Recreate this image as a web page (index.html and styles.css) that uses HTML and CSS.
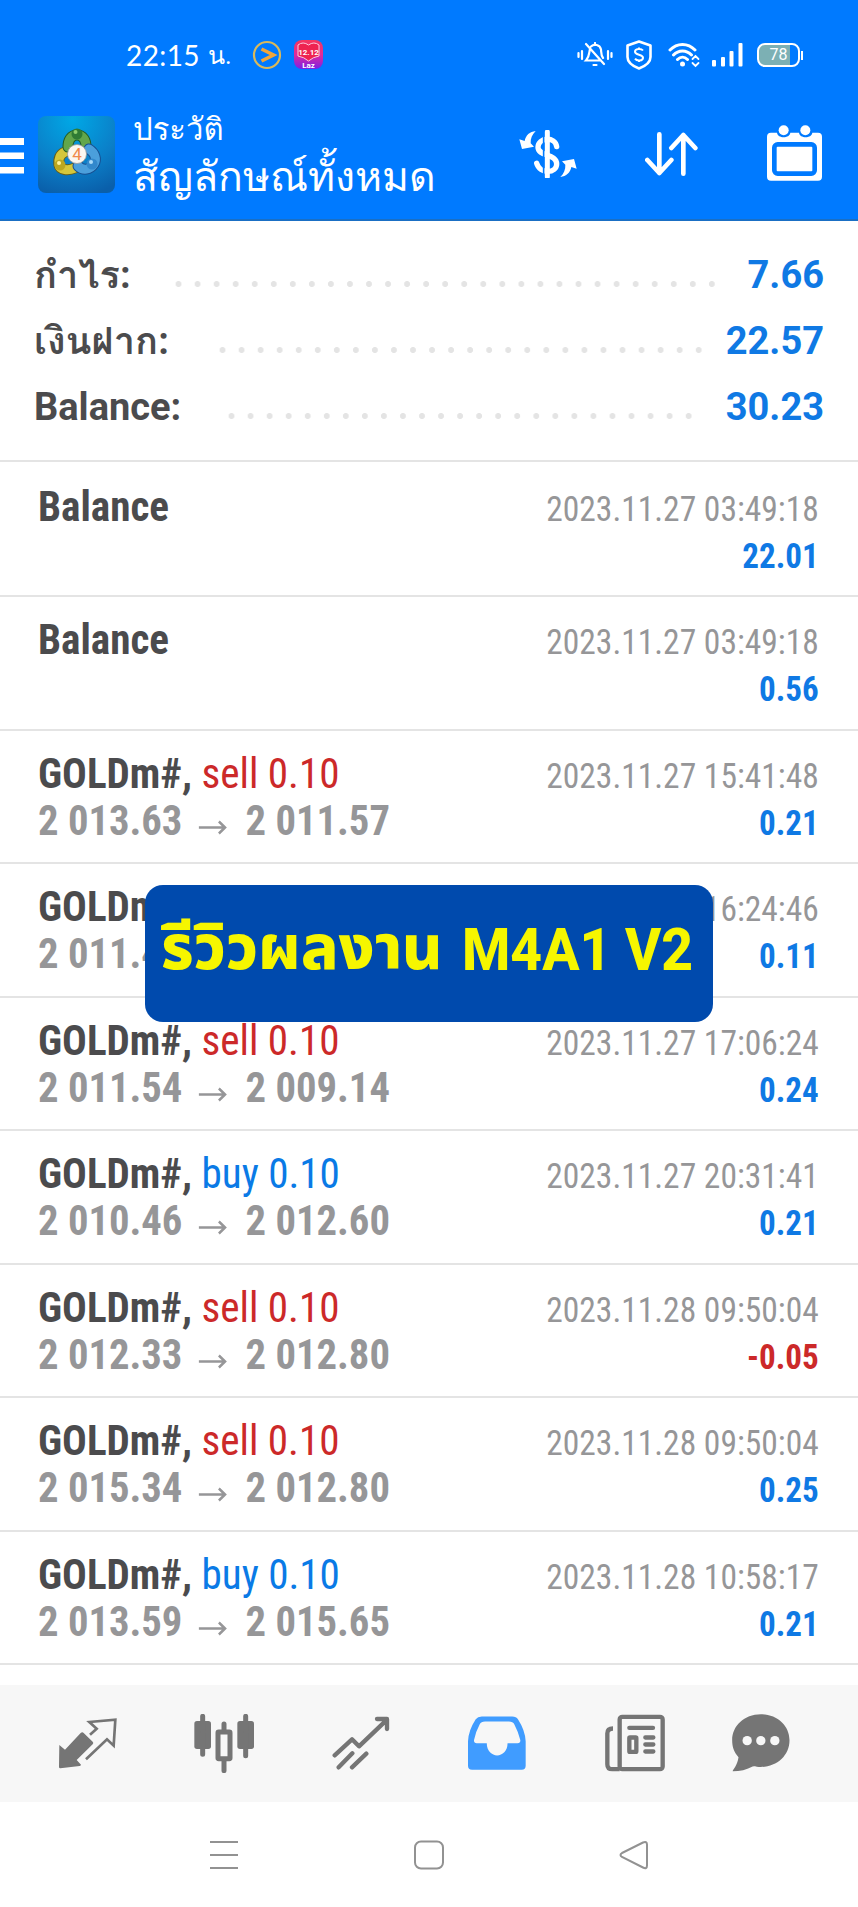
FILE: index.html
```
<!DOCTYPE html>
<html lang="th">
  <head>
    <meta charset="utf-8" />
    <meta name="viewport" content="width=device-width, initial-scale=1" />
    <title>ประวัติ</title>
    <link rel="stylesheet" href="styles.css">
  </head>
  <body>
    <header class="header">
      <div class="status">
        <span class="clock">22:15</span>
        <span class="clock-unit">น.</span>
        <svg class="go-icon" width="30" height="30" viewBox="0 0 30 30">
          <circle cx="15" cy="15" r="13" fill="none" stroke="#d9b95b" stroke-width="2.2"/>
          <path d="M9.500 9l12 6-12 6" fill="none" stroke="#f0a63c" stroke-width="3.6"/>
        </svg>
        <svg class="laz-icon" width="32" height="32" viewBox="0 0 32 32">
          <defs>
            <linearGradient id="laz" x1="0" y1="0" x2="0" y2="1">
              <stop offset="0" stop-color="#f5365c"/>
              <stop offset=".5" stop-color="#e02a9a"/>
              <stop offset="1" stop-color="#7a1fe8"/>
            </linearGradient>
          </defs>
          <rect x="1" y="1" width="29" height="29" rx="8" fill="url(#laz)"/>
          <path d="M5 6q5-4 10.500 0 5.500-4 10.500 0v11q-6 1-10.500 5-4.500-4-10.500-5z" fill="#ee2350" stroke="#ffc9dc" stroke-width="1"/>
          <text x="15.500" y="15.500" class="laz-date">12.12</text>
          <text x="15.500" y="28.500" class="laz-name">Laz</text>
        </svg>
        <div class="status-right">
          <svg class="bell-icon" width="36" height="26" viewBox="0 0 36 26" fill="none" stroke="#fff" stroke-width="2.200" stroke-linecap="round">
            <path d="M1.500 11v4M5 9v8M31 9v8M34.500 11v4M9 2l18 20M13 7c-1 3 0 7-4 11.500h15M14 4.500c3-3 9-2 10 3 .3 3 0 6 2 8.500M18 2V1M16.500 23h3"/>
          </svg>
          <svg class="shield-icon" width="26" height="30" viewBox="0 0 26 30" fill="none" stroke="#fff" stroke-width="2.600" stroke-linejoin="round">
            <path d="M13 1.500l11.500 4V17c0 6-5 9-11.500 11.500C6.500 26 1.500 23 1.500 17V5.500z"/>
            <path d="M17 10.500c-2-2.500-8-2-8 1.200 0 3.800 8 2.200 8 6 0 3.300-6 3.800-8 1M13 7.500v2M13 20v2" stroke-width="2"/>
          </svg>
          <svg class="wifi-icon" width="32" height="26" viewBox="0 0 32 26" fill="none" stroke="#fff" stroke-width="3" stroke-linecap="round">
            <path d="M2 8C9 .5 20 .5 27 8M5.500 13c5-5.500 13-5.500 18 0M9.500 17.500c3-3 7-3 10 0"/>
            <circle cx="14.500" cy="22" r="2.500" fill="#fff" stroke="none"/>
            <path d="M24.500 17l3-3 3 3M24.500 21l3 3 3-3" stroke-width="1.800"/>
          </svg>
          <svg class="signal-icon" width="31" height="25" viewBox="0 0 31 25" fill="#fff">
            <rect y="18" width="4" height="6.500" rx="1"/>
            <rect x="9" y="15" width="4" height="9.500" rx="1"/>
            <rect x="17.500" y="9" width="4" height="15.500" rx="1"/>
            <rect x="26.500" y="1" width="4" height="23.500" rx="1"/>
          </svg>
          <div class="battery">78</div>
        </div>
      </div>
      <div class="appbar">
        <svg class="menu-icon" width="24" height="36" viewBox="0 0 24 36" fill="#fff">
          <path d="M0 0h24v7H0zM0 14.500h24v6.500H0zM0 29h24v6.500H0z"/>
        </svg>
        <svg class="logo" width="77" height="77" viewBox="0 0 77 77">
          <defs>
            <radialGradient id="logo-bg" cx=".45" cy=".05" r="1">
              <stop offset="0" stop-color="#00a8e6"/>
              <stop offset=".6" stop-color="#0b7fc8"/>
              <stop offset="1" stop-color="#0a5faa"/>
            </radialGradient>
          </defs>
          <rect width="77" height="77" rx="8" fill="url(#logo-bg)"/>
          <g fill="none" stroke-linecap="round">
            <path d="M37 52c-7 3-15 2-16-3-1-6 1-11 6-13" stroke="#665f18" stroke-width="11"/>
            <path d="M37 52c-7 3-15 2-16-3-1-6 1-11 6-13" stroke="#d5c73b" stroke-width="9"/>
            <path d="M30 31c0-7 3-12 9-12s9 5 9 12" stroke="#235c24" stroke-width="11"/>
            <path d="M30 31c0-7 3-12 9-12s9 5 9 12" stroke="#62a64b" stroke-width="9"/>
            <path d="M51 33c6 4 8 10 5 15-4 6-11 7-16 2" stroke="#174f91" stroke-width="11"/>
            <path d="M51 33c6 4 8 10 5 15-4 6-11 7-16 2" stroke="#4b9fdc" stroke-width="9"/>
          </g>
          <circle cx="39" cy="18" r="5.500" fill="#2f7b34"/>
          <circle cx="37.500" cy="16" r="2" fill="#8ccd6c"/>
          <circle cx="22" cy="49" r="5.500" fill="#bba71f"/>
          <circle cx="21" cy="47" r="2" fill="#fff49a"/>
          <circle cx="54" cy="48" r="5.500" fill="#3288cc"/>
          <circle cx="53" cy="46" r="2" fill="#a8dafa"/>
          <circle cx="39" cy="38" r="9.500" fill="#fbf7f0" stroke="#999" stroke-width=".8"/>
          <text x="39" y="44" class="logo-num">4</text>
        </svg>
        <div class="titles">
          <div class="title-small">ประวัติ</div>
          <div class="title-big">สัญลักษณ์ทั้งหมด</div>
        </div>
        <div class="actions">
          <svg class="action-symbol" width="58" height="48" viewBox="0 0 174 144" fill="none" stroke="#fff">
            <path d="M113 50c-4-32-56-28-56 2 0 28 56 18 56 50 0 28-50 32-60-2" stroke-width="16" stroke-linecap="round"/>
            <path d="M74 14v118" stroke="#007aff" stroke-width="5"/>
            <path d="M85 6v134" stroke-width="15" stroke-linecap="round"/>
            <path d="M50 3C32 5 20 16 17 33L1 28l8 29 36-7-10-10C34 25 40 13 50 3zM124 141c18-2 30-13 33-30l16 5-8-29-36 7 10 10c1 15-5 27-15 37z" fill="#fff" stroke="none"/>
          </svg>
          <svg class="action-sort" width="53" height="44" viewBox="0 0 159 132" fill="none" stroke="#fff" stroke-width="14" stroke-linecap="round" stroke-linejoin="round">
            <path d="M43 7v116M7 84l36 39 36-39M115 125V9M79 48l36-39 36 39"/>
          </svg>
          <svg class="action-calendar" width="55" height="56" viewBox="0 0 165 168" fill="#fff">
            <path d="M12 23h18c2 18 38 18 40 0h26c2 18 38 18 40 0h17q12 0 12 12v120q0 12-12 12H12q-12 0-12-12V35q0-12 12-12z"/>
            <rect x="22" y="58" width="121" height="88" rx="10" fill="none" stroke="#007aff" stroke-width="14"/>
            <circle cx="50" cy="16" r="15"/>
            <circle cx="115" cy="16" r="15"/>
          </svg>
        </div>
      </div>
    </header>

    <main class="history">
      <section class="summary">
        <div class="summary-row profit">
          <span class="summary-label">กำไร:</span><i class="leader"></i><span class="summary-value">7.66</span>
        </div>
        <div class="summary-row deposit">
          <span class="summary-label">เงินฝาก:</span><i class="leader"></i><span class="summary-value">22.57</span>
        </div>
        <div class="summary-row balance">
          <span class="summary-label">Balance:</span><i class="leader"></i><span class="summary-value">30.23</span>
        </div>
      </section>

      <ul class="deals">
        <li class="deal">
          <div class="deal-left"><div class="deal-name">Balance</div></div>
          <div class="deal-right"><div class="deal-time">2023.11.27 03:49:18</div><div class="deal-profit">22.01</div></div>
        </li>
        <li class="deal">
          <div class="deal-left"><div class="deal-name">Balance</div></div>
          <div class="deal-right"><div class="deal-time">2023.11.27 03:49:18</div><div class="deal-profit">0.56</div></div>
        </li>
        <li class="deal">
          <div class="deal-left">
            <div class="deal-name">GOLDm#, <span class="sell">sell 0.10</span></div>
            <div class="deal-price">2 013.63 <svg class="arrow" viewBox="0 0 28 14"><path d="M0 7h26M20 1.500l6 5.500-6 5.500"/></svg> 2 011.57</div>
          </div>
          <div class="deal-right"><div class="deal-time">2023.11.27 15:41:48</div><div class="deal-profit">0.21</div></div>
        </li>
        <li class="deal">
          <div class="deal-left">
            <div class="deal-name">GOLDm#,</div>
            <div class="deal-price">2 011.4</div>
          </div>
          <div class="deal-right"><div class="deal-time">2023.11.27 16:24:46</div><div class="deal-profit">0.11</div></div>
        </li>
        <li class="deal">
          <div class="deal-left">
            <div class="deal-name">GOLDm#, <span class="sell">sell 0.10</span></div>
            <div class="deal-price">2 011.54 <svg class="arrow" viewBox="0 0 28 14"><path d="M0 7h26M20 1.500l6 5.500-6 5.500"/></svg> 2 009.14</div>
          </div>
          <div class="deal-right"><div class="deal-time">2023.11.27 17:06:24</div><div class="deal-profit">0.24</div></div>
        </li>
        <li class="deal">
          <div class="deal-left">
            <div class="deal-name">GOLDm#, <span class="buy">buy 0.10</span></div>
            <div class="deal-price">2 010.46 <svg class="arrow" viewBox="0 0 28 14"><path d="M0 7h26M20 1.500l6 5.500-6 5.500"/></svg> 2 012.60</div>
          </div>
          <div class="deal-right"><div class="deal-time">2023.11.27 20:31:41</div><div class="deal-profit">0.21</div></div>
        </li>
        <li class="deal">
          <div class="deal-left">
            <div class="deal-name">GOLDm#, <span class="sell">sell 0.10</span></div>
            <div class="deal-price">2 012.33 <svg class="arrow" viewBox="0 0 28 14"><path d="M0 7h26M20 1.500l6 5.500-6 5.500"/></svg> 2 012.80</div>
          </div>
          <div class="deal-right"><div class="deal-time">2023.11.28 09:50:04</div><div class="deal-profit loss">-0.05</div></div>
        </li>
        <li class="deal">
          <div class="deal-left">
            <div class="deal-name">GOLDm#, <span class="sell">sell 0.10</span></div>
            <div class="deal-price">2 015.34 <svg class="arrow" viewBox="0 0 28 14"><path d="M0 7h26M20 1.500l6 5.500-6 5.500"/></svg> 2 012.80</div>
          </div>
          <div class="deal-right"><div class="deal-time">2023.11.28 09:50:04</div><div class="deal-profit">0.25</div></div>
        </li>
        <li class="deal">
          <div class="deal-left">
            <div class="deal-name">GOLDm#, <span class="buy">buy 0.10</span></div>
            <div class="deal-price">2 013.59 <svg class="arrow" viewBox="0 0 28 14"><path d="M0 7h26M20 1.500l6 5.500-6 5.500"/></svg> 2 015.65</div>
          </div>
          <div class="deal-right"><div class="deal-time">2023.11.28 10:58:17</div><div class="deal-profit">0.21</div></div>
        </li>
      </ul>
    </main>

    <nav class="tabs">
      <svg class="tab-quotes" width="58" height="51" viewBox="176 175 174 153" fill="#757575">
        <path d="M177 256l17 14 47-50q5-4 9 0l27 26q4 4 0 8l-48 47 13 14q0 3-4 4l-58 7q-4 0-4-4z"/>
        <path d="M269 225l20-18-22-20 78-7-5 78-20-19-63 60" fill="none" stroke="#757575" stroke-width="8"/>
      </svg>
      <svg class="tab-charts" width="60" height="59" viewBox="581 162 180 177" fill="#757575">
        <rect x="582" y="183" width="50" height="84" rx="8"/>
        <rect x="711" y="183" width="50" height="84" rx="8"/>
        <path d="M607 169v114M736 169v118M671 192v22M671 300v32" stroke="#757575" stroke-width="15" stroke-linecap="round"/>
        <rect x="653" y="216" width="36" height="80" rx="2" fill="none" stroke="#757575" stroke-width="15"/>
      </svg>
      <svg class="tab-trade" width="58" height="54" viewBox="995 167 174 162" fill="none" stroke="#757575" stroke-width="13" stroke-linecap="round">
        <path d="M1003 285l52-48 21 21 81-77M1130 176h30v30M1015 321l41-42M1055 321l43-41" stroke-linejoin="round"/>
      </svg>
      <svg class="tab-history" width="58" height="54" viewBox="117 167 173 160">
        <path d="M158 168h91q12 0 17 8 22 34 23 66v73q0 12-12 12H129q-12 0-12-12v-73q1-32 23-66 6-8 18-8z" fill="#409cff"/>
        <path d="M168 183h71q12 0 16 8 13 25 18 47 1 10-8 10h-30c0 48-62 48-62 0h-30q-9 0-8-10 5-25 17-47 4-8 16-8z" fill="#f7f7f7"/>
      </svg>
      <svg class="tab-news" width="60" height="58" viewBox="527 161 180 173" fill="none" stroke="#757575" stroke-width="13" stroke-linecap="round">
        <rect x="571" y="169" width="129" height="157" rx="8"/>
        <path d="M571 326h-22q-15 0-15-15V219q0-15 17-15" stroke-linecap="butt"/>
        <path d="M600 202h71M648 231h24M648 252h24M648 273h24"/>
        <rect x="600" y="231" width="21" height="43" rx="2"/>
      </svg>
      <svg class="tab-chat" width="58" height="58" viewBox="907 161 173 174">
        <path d="M993 162c50 0 86 35 86 78 0 46-38 80-86 80-8 0-16 0-23-2-20 11-40 15-61 15-3-2 14-16 17-42-13-15-19-30-19-51 0-43 36-78 86-78z" fill="#757575"/>
        <g fill="#f7f7f7">
          <circle cx="952" cy="241" r="14"/>
          <circle cx="993" cy="241" r="14"/>
          <circle cx="1035" cy="241" r="14"/>
        </g>
      </svg>
    </nav>

    <nav class="sysnav">
      <svg width="30" height="30" viewBox="0 0 30 30"><path d="M1 2h28M1 15h28M1 28h28"/></svg>
      <svg width="30" height="30" viewBox="0 0 30 30"><rect x="1" y="1.500" width="28" height="27" rx="6"/></svg>
      <svg width="30" height="30" viewBox="0 0 30 30"><path d="M3 13L24 2.500q4-1.500 4 2v21q0 4-4 2L3 17q-3-2 0-4z"/></svg>
    </nav>

    <div class="banner"><span class="banner-thai">รีวิวผลงาน</span> <span class="banner-model">M4A1 V2</span></div>
  </body>
</html>
```
FILE: styles.css
```
body {
  margin: 0;
  position: relative;
  width: 858px;
  height: 1907px;
  overflow: hidden;
  background: #fff;
  font-family: Roboto, Loma, "Noto Sans Thai Looped", "Noto Sans", sans-serif;
}

svg {
  display: block;
  flex: none;
}

/* Header */
.header {
  box-sizing: border-box;
  height: 221px;
  background: #007aff;
  border-bottom: 2px solid #1a6fc4;
  color: #fff;
}

.status {
  display: flex;
  align-items: center;
  height: 109px;
  padding-left: 126px;
}

.clock {
  font-family: Lato, sans-serif;
  font-size: 28px;
  letter-spacing: 0.4px;
}

.clock-unit {
  width: 25px;
  margin-left: 8px;
  font-size: 25px;
}

.go-icon {
  margin-left: 19px;
}

.laz-icon {
  margin-left: 11px;
}

.laz-date,
.laz-name {
  font-family: Roboto, sans-serif;
  font-weight: 700;
  font-size: 8px;
  fill: #fff;
  text-anchor: middle;
}

.status-right {
  display: flex;
  align-items: center;
  margin: 0 58px 0 auto;
}

.shield-icon {
  margin-left: 13px;
}

.wifi-icon {
  margin-left: 16px;
}

.signal-icon {
  margin-left: 12px;
}

.battery {
  position: relative;
  box-sizing: border-box;
  width: 43px;
  height: 24px;
  margin-left: 14px;
  border: 2px solid #fff;
  border-radius: 8px;
  background: linear-gradient(90deg, #7cb0b4 80%, #007aff 80%);
  font-size: 16px;
  line-height: 20px;
  text-align: center;
}

.battery::after {
  content: "";
  position: absolute;
  top: 6px;
  right: -5px;
  width: 2px;
  height: 9px;
  background: #fff;
}

.appbar {
  display: flex;
  height: 110px;
}

.menu-icon {
  margin-top: 29px;
}

.logo {
  margin: 7px 0 0 14px;
}

.logo-num {
  font-family: Roboto, sans-serif;
  font-size: 17px;
  fill: #f08a4b;
  text-anchor: middle;
}

.titles {
  margin-left: 18px;
  font-family: Loma, "Noto Sans Thai Looped", sans-serif;
}

.title-small {
  font-size: 31px;
  line-height: 40px;
}

.title-big {
  font-size: 41px;
  line-height: 56px;
}

.actions {
  display: flex;
  margin: 0 36px 0 auto;
}

.action-symbol {
  margin-top: 21px;
}

.action-sort {
  margin: 23px 0 0 68px;
}

.action-calendar {
  margin: 16px 0 0 69px;
}

/* Totals */
.summary {
  box-sizing: border-box;
  height: 241px;
  padding: 21px 34px 0;
  border-bottom: 2px solid #e4e4e4;
}

.summary-row {
  display: grid;
  align-items: center;
  height: 66px;
  font-size: 38px;
  font-weight: 700;
  line-height: 66px;
}

.profit {
  grid-template-columns: 135px 553px 1fr;
}

.deposit {
  grid-template-columns: 179px 496px 1fr;
}

.balance {
  grid-template-columns: 188px 477px 1fr;
}

.summary-label {
  color: #4b4b4d;
}

.summary-value {
  color: #0f79e4;
  text-align: right;
}

.leader {
  height: 6px;
  margin-top: 17px;
  background: radial-gradient(circle, #e4e4e4 2.6px, transparent 3.4px) 0 0 / 19.06px 6px repeat-x;
}

/* Deals */
.deals {
  margin: 0;
  padding: 0;
  list-style: none;
}

.deal {
  display: flex;
  justify-content: space-between;
  box-sizing: border-box;
  height: 133.55px;
  padding: 19px 39px 0 38px;
  border-bottom: 2px solid #e4e4e4;
  font-family: "Roboto Condensed", Roboto, sans-serif;
  font-stretch: 75%;
  white-space: nowrap;
}

.deal:first-child {
  height: 135px;
  padding-top: 21px;
}

.deal-left,
.deal-right {
  line-height: 47px;
}

.deal-name {
  color: #4b4b4d;
  font-size: 43px;
  font-weight: 700;
  transform: scaleX(0.956);
  transform-origin: left;
}

.deal-name span {
  font-weight: 400;
}

.sell {
  color: #cc2929;
}

.buy {
  color: #0a7ae6;
}

.deal-price {
  color: #969698;
  font-size: 43px;
  font-weight: 700;
  transform: scaleX(0.945);
  transform-origin: left;
}

.arrow {
  display: inline-block;
  width: 30px;
  height: 15px;
  margin: 0 10px 0 7px;
  fill: none;
  stroke: #969698;
  stroke-width: 2.5;
}

.deal-right {
  padding-top: 3px;
  text-align: right;
}

.deal-time {
  color: #969698;
  font-size: 35px;
  transform: scaleX(0.957);
  transform-origin: right;
}

.deal-profit {
  color: #0f79e4;
  font-size: 35px;
  font-weight: 700;
  transform: scaleX(0.945);
  transform-origin: right;
}

.deal-profit.loss {
  color: #cc2929;
}

/* Bottom bars */
.tabs {
  display: flex;
  height: 117px;
  margin-top: 20px;
  background: #f7f7f7;
}

.tab-quotes {
  margin: 33px 0 0 59px;
}

.tab-charts {
  margin: 29px 0 0 77px;
}

.tab-trade {
  margin: 31px 0 0 78px;
}

.tab-history {
  margin: 31px 0 0 78px;
}

.tab-news {
  margin: 29px 0 0 79px;
}

.tab-chat {
  margin: 29px 0 0 67px;
}

.sysnav {
  display: flex;
  gap: 175px;
  padding: 38px 0 0 209px;
}

.sysnav svg {
  fill: none;
  stroke: #929292;
  stroke-width: 2;
}

/* Caption over the list */
.banner {
  position: absolute;
  top: 885px;
  left: 145px;
  box-sizing: border-box;
  display: flex;
  width: 568px;
  height: 137px;
  padding-left: 16px;
  border-radius: 18px;
  background: #004aad;
  color: #f6f600;
  font-weight: 800;
  line-height: 130px;
  white-space: nowrap;
}

.banner-thai {
  width: 301px;
  font-family: "Noto Sans Thai", sans-serif;
  font-size: 62px;
}

.banner-model {
  font-size: 60px;
  transform: scaleX(0.92);
  transform-origin: left;
}
```
